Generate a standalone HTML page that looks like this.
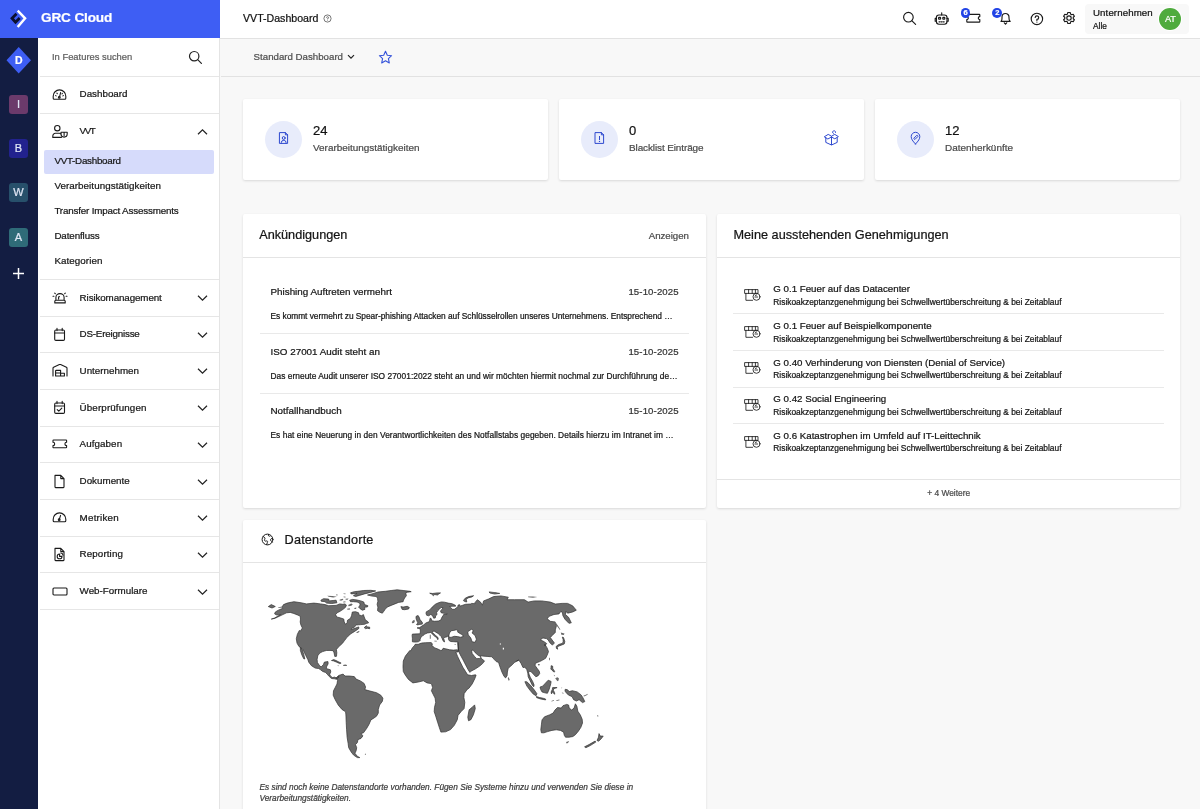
<!DOCTYPE html>
<html lang="de">
<head>
<meta charset="utf-8">
<title>VVT-Dashboard</title>
<style>
*{box-sizing:border-box;margin:0;padding:0}
html,body{width:1200px;height:809px;overflow:hidden;background:#f8f8f8;font-family:"Liberation Sans",sans-serif;color:#1c1c1c;-webkit-text-stroke:.22px currentColor}
.abs{position:absolute}
#brand{position:absolute;left:0;top:0;width:220px;height:38px;background:#3e5ef4}
#brand .t{position:absolute;left:41px;top:9px;font-size:13.6px;line-height:18px;color:#fff;font-weight:bold;letter-spacing:-0.15px}
#rail{position:absolute;left:0;top:38px;width:38px;height:771px;background:#131d42}
.rb{position:absolute;left:9px;width:19px;height:19px;border-radius:3px;color:#dfe6f5;font-size:11px;line-height:19px;text-align:center}
#nav{position:absolute;left:38px;top:38px;width:182px;height:771px;background:#fff;border-right:1px solid #e4e4e4}
#nav .hr{position:absolute;left:2px;right:0;height:1px;background:#e6e6e6}
#nav .it{position:absolute;left:41.6px;font-size:9.8px;line-height:14px;color:#161616;white-space:nowrap}
#nav .sub{position:absolute;left:16.4px;font-size:9.8px;line-height:14px;color:#161616;white-space:nowrap}
#nav svg.ic{position:absolute;left:14px}
#nav svg.ch{position:absolute;left:159px}
#topbar{position:absolute;left:220px;top:0;width:980px;height:38.6px;background:#fff;border-bottom:1px solid #e2e2e2}
#toolbar{position:absolute;left:221px;top:39px;width:979px;height:38px;background:#f8f8f8;border-bottom:1px solid #e2e2e2}
.card{position:absolute;background:#fff;border-radius:2px;box-shadow:0 1px 2.5px rgba(0,0,0,.13)}
.circle{position:absolute;width:37px;height:37px;border-radius:50%;background:#e8ecfb}
.num{position:absolute;font-size:13px;line-height:16px;color:#111}
.lbl{position:absolute;font-size:9.95px;line-height:14px;color:#4a4a4a;white-space:nowrap}
.h{position:absolute;font-size:12.7px;line-height:18px;color:#141414;white-space:nowrap}
.line{position:absolute;height:1px;background:#e4e4e4}
.at{position:absolute;font-size:9.85px;line-height:14px;color:#141414;white-space:nowrap}
.ad{position:absolute;font-size:9.6px;line-height:14px;color:#333;white-space:nowrap}
.ab{position:absolute;font-size:8.35px;line-height:12px;color:#141414;white-space:nowrap}
.gt{position:absolute;font-size:9.72px;line-height:14px;color:#141414;white-space:nowrap}
.gs{position:absolute;font-size:8.4px;line-height:12px;color:#141414;white-space:nowrap}
</style>
</head>
<body><div id="root" style="position:absolute;left:0;top:0;width:1200px;height:809px;overflow:hidden;will-change:transform">
<!-- brand -->
<div id="brand">
<svg class="abs" style="left:9px;top:8px" width="20" height="22" viewBox="9 8 20 22"><path d="M16.5 13.7 L12 18.3 L15.5 22.2 L19.7 18" fill="none" stroke="#0b1030" stroke-width="2.8" stroke-linejoin="miter"/><path d="M17.7 10.7 L25.1 18.3 L17.7 27" fill="none" stroke="#fff" stroke-width="2.4"/></svg>
<div class="t">GRC Cloud</div>
</div>
<!-- rail -->
<div id="rail">
<svg class="abs" style="left:4px;top:8px" width="30" height="30" viewBox="0 0 30 30"><path d="M14.7 0.9 L27 14.2 L14.7 27.4 L2.5 14.2 Z" fill="#3e5ef4"/></svg>
<div class="abs" style="left:3.7px;top:15px;width:30px;text-align:center;color:#fff;font-weight:bold;font-size:10.5px;line-height:14px">D</div>
<div class="rb" style="top:57px;background:#6b3a6b">I</div>
<div class="rb" style="top:101px;background:#22228e">B</div>
<div class="rb" style="top:145px;background:#27506b">W</div>
<div class="rb" style="top:189.5px;background:#2f6b78">A</div>
<svg class="abs" style="left:12px;top:228.7px" width="13" height="13" viewBox="0 0 13 13"><path d="M6.5 1v11M1 6.5h11" stroke="#fff" stroke-width="1.5" fill="none"/></svg>
</div>
<!-- nav -->
<div id="nav">
<div class="abs" style="left:14px;top:12px;font-size:9.4px;line-height:13px;color:#5e5e5e;white-space:nowrap">In Features suchen</div>
<svg class="abs" style="left:150px;top:11.5px" width="15" height="15" viewBox="0 0 15 15"><circle cx="6.2" cy="6.2" r="4.7" fill="none" stroke="#222" stroke-width="1.2"/><path d="M9.7 9.7 L13.4 13.4" stroke="#222" stroke-width="1.2" stroke-linecap="round"/></svg>
<div class="hr" style="top:37.8px"></div>
<div class="hr" style="top:74.5px"></div>
<div class="hr" style="top:240.8px"></div>
<div class="hr" style="top:277.5px"></div>
<div class="hr" style="top:314.2px"></div>
<div class="hr" style="top:350.9px"></div>
<div class="hr" style="top:387.6px"></div>
<div class="hr" style="top:424.3px"></div>
<div class="hr" style="top:460.9px"></div>
<div class="hr" style="top:497.6px"></div>
<div class="hr" style="top:534.3px"></div>
<div class="hr" style="top:571.0px"></div>
<svg class="ic" style="top:48.5px" width="16" height="15" viewBox="0 0 16 15"><path d="M1.2 11.2 V9.2 A6.3 6.3 0 0 1 13.8 9.2 V11.2 Q13.8 12.2 12.8 12.2 H2.2 Q1.2 12.2 1.2 11.2 Z" fill="none" stroke="#1a1a1a" stroke-width="1.1" stroke-linejoin="round" stroke-linecap="round"/><path d="M7.5 10.2 L8.6 5.6 M3.6 8.6 l.5.3 M4.9 6.2l.4.5 M11.4 8.6l-.5.3 M10.4 6.4l-.4.4" fill="none" stroke="#1a1a1a" stroke-width="1.1" stroke-linejoin="round" stroke-linecap="round"/><circle cx="7.3" cy="10.4" r=".9" fill="none" stroke="#1a1a1a" stroke-width="1.1" stroke-linejoin="round" stroke-linecap="round"/></svg>
<div class="it" style="top:49.0px">Dashboard</div>
<svg class="ic" style="top:85.5px" width="18" height="15" viewBox="0 0 18 15"><circle cx="5.3" cy="4.2" r="2.7" fill="none" stroke="#1a1a1a" stroke-width="1.1" stroke-linejoin="round" stroke-linecap="round"/><path d="M.8 13.4 V11.9 A2.6 2.6 0 0 1 3.4 9.3 H7.4 Q8.3 9.3 8.9 9.8 M.8 13.4 H9.4" fill="none" stroke="#1a1a1a" stroke-width="1.1" stroke-linejoin="round" stroke-linecap="round"/><path d="M9 8.2 H15.2 V9.8 A3.1 3.3 0 0 1 9 9.8 Z M12.1 8.4 V11.6" fill="none" stroke="#1a1a1a" stroke-width="1.1" stroke-linejoin="round" stroke-linecap="round"/></svg>
<div class="it" style="top:86.0px;letter-spacing:-1.45px">VVT</div>
<svg class="ch" style="top:89.5px" width="11" height="8" viewBox="0 0 11 7.5"><path d="M1 6 L5.5 1.5 L10 6" fill="none" stroke="#222" stroke-width="1.2"/></svg>
<svg class="ic" style="top:252.0px" width="16" height="15" viewBox="0 0 16 15"><path d="M3.9 10.2 V7.4 A4.1 3.8 0 0 1 12.1 7.4 V10.2 M2.8 12.9 V11.2 Q2.8 10.2 3.8 10.2 H12.2 Q13.2 10.2 13.2 11.2 V12.9 Z M6.6 9 V7.4 Q6.6 6.6 7.4 6.6" fill="none" stroke="#1a1a1a" stroke-width="1.1" stroke-linejoin="round" stroke-linecap="round"/><path d="M1 6.3h.9 M14.1 6.3h.9 M2.7 3.1l.6.6 M13.3 3.1l-.6.6" fill="none" stroke="#1a1a1a" stroke-width="1.1" stroke-linejoin="round" stroke-linecap="round"/></svg>
<div class="it" style="top:252.5px;letter-spacing:-0.11px">Risikomanagement</div>
<svg class="ch" style="top:256.0px" width="11" height="8" viewBox="0 0 11 7.5"><path d="M1 1.5 L5.5 6 L10 1.5" fill="none" stroke="#222" stroke-width="1.2"/></svg>
<svg class="ic" style="top:288.7px" width="16" height="15" viewBox="0 0 16 15"><rect x="2.7" y="3" width="9.8" height="10.4" rx="1.2" fill="none" stroke="#1a1a1a" stroke-width="1.1" stroke-linejoin="round" stroke-linecap="round"/><path d="M2.7 6 H12.5 M5 1.4 V3.6 M10.2 1.4 V3.6" fill="none" stroke="#1a1a1a" stroke-width="1.1" stroke-linejoin="round" stroke-linecap="round"/></svg>
<div class="it" style="top:289.2px;letter-spacing:-0.2px">DS-Ereignisse</div>
<svg class="ch" style="top:292.7px" width="11" height="8" viewBox="0 0 11 7.5"><path d="M1 1.5 L5.5 6 L10 1.5" fill="none" stroke="#222" stroke-width="1.2"/></svg>
<svg class="ic" style="top:325.4px" width="16" height="15" viewBox="0 0 16 15"><path d="M1 13 V5.2 Q1 4.6 1.6 4.3 L7.4 1.6 Q8 1.4 8.6 1.6 L14.4 4.3 Q15 4.6 15 5.2 V13 M3.6 13 V8 Q3.6 7.4 4.2 7.4 H8.6 V13 M3.6 10 H8.6 M8.6 10.2 H12.4 V13 M3.6 13 H12.4" fill="none" stroke="#1a1a1a" stroke-width="1.1" stroke-linejoin="round" stroke-linecap="round"/></svg>
<div class="it" style="top:325.9px">Unternehmen</div>
<svg class="ch" style="top:329.4px" width="11" height="8" viewBox="0 0 11 7.5"><path d="M1 1.5 L5.5 6 L10 1.5" fill="none" stroke="#222" stroke-width="1.2"/></svg>
<svg class="ic" style="top:362.1px" width="16" height="15" viewBox="0 0 16 15"><rect x="2.7" y="3" width="9.8" height="10.4" rx="1.2" fill="none" stroke="#1a1a1a" stroke-width="1.1" stroke-linejoin="round" stroke-linecap="round"/><path d="M2.7 6 H12.5 M5 1.4 V3.6 M10.2 1.4 V3.6 M5.2 9.6 L6.8 11.2 L9.8 8.2" fill="none" stroke="#1a1a1a" stroke-width="1.1" stroke-linejoin="round" stroke-linecap="round"/></svg>
<div class="it" style="top:362.6px;letter-spacing:0.12px">Überprüfungen</div>
<svg class="ch" style="top:366.1px" width="11" height="8" viewBox="0 0 11 7.5"><path d="M1 1.5 L5.5 6 L10 1.5" fill="none" stroke="#222" stroke-width="1.2"/></svg>
<svg class="ic" style="top:398.8px" width="16" height="15" viewBox="0 0 16 15"><path d="M1.6 3 H14 Q14.6 3 14.6 3.6 V5.2 A1.7 1.7 0 0 0 14.6 8.6 V10.2 Q14.6 10.8 14 10.8 H1.6 Q1 10.8 1 10.2 V8.6 A1.7 1.7 0 0 0 1 5.2 V3.6 Q1 3 1.6 3 Z" fill="none" stroke="#1a1a1a" stroke-width="1.1" stroke-linejoin="round" stroke-linecap="round"/></svg>
<div class="it" style="top:399.3px;letter-spacing:0.08px">Aufgaben</div>
<svg class="ch" style="top:402.8px" width="11" height="8" viewBox="0 0 11 7.5"><path d="M1 1.5 L5.5 6 L10 1.5" fill="none" stroke="#222" stroke-width="1.2"/></svg>
<svg class="ic" style="top:435.5px" width="16" height="15" viewBox="0 0 16 15"><path d="M3 1.4 H8.8 L12 4.6 V13 Q12 13.6 11.4 13.6 H3.6 Q3 13.6 3 13 Z M8.8 1.4 V4.6 H12" fill="none" stroke="#1a1a1a" stroke-width="1.1" stroke-linejoin="round" stroke-linecap="round"/></svg>
<div class="it" style="top:436.0px">Dokumente</div>
<svg class="ch" style="top:439.5px" width="11" height="8" viewBox="0 0 11 7.5"><path d="M1 1.5 L5.5 6 L10 1.5" fill="none" stroke="#222" stroke-width="1.2"/></svg>
<svg class="ic" style="top:472.2px" width="16" height="15" viewBox="0 0 16 15"><path d="M1.2 10.8 V9.2 A6.3 6.3 0 0 1 13.8 9.2 V10.8 Q13.8 11.8 12.8 11.8 H2.2 Q1.2 11.8 1.2 10.8 Z M7.3 9.4 L8.6 5.4" fill="none" stroke="#1a1a1a" stroke-width="1.1" stroke-linejoin="round" stroke-linecap="round"/><circle cx="7.2" cy="9.8" r=".9" fill="none" stroke="#1a1a1a" stroke-width="1.1" stroke-linejoin="round" stroke-linecap="round"/></svg>
<div class="it" style="top:472.7px;letter-spacing:0.22px">Metriken</div>
<svg class="ch" style="top:476.2px" width="11" height="8" viewBox="0 0 11 7.5"><path d="M1 1.5 L5.5 6 L10 1.5" fill="none" stroke="#222" stroke-width="1.2"/></svg>
<svg class="ic" style="top:508.9px" width="16" height="15" viewBox="0 0 16 15"><path d="M3 1.4 H8.8 L12 4.6 V13 Q12 13.6 11.4 13.6 H3.6 Q3 13.6 3 13 Z M8.8 1.4 V4.6 H12" fill="none" stroke="#1a1a1a" stroke-width="1.1" stroke-linejoin="round" stroke-linecap="round"/><path d="M7.6 7 A2.4 2.4 0 1 0 10 9.4 H7.6 Z M8.8 6 A2.4 2.4 0 0 1 11 8.2" fill="none" stroke="#1a1a1a" stroke-width="1.1" stroke-linejoin="round" stroke-linecap="round"/></svg>
<div class="it" style="top:509.4px;letter-spacing:0.1px">Reporting</div>
<svg class="ch" style="top:512.9px" width="11" height="8" viewBox="0 0 11 7.5"><path d="M1 1.5 L5.5 6 L10 1.5" fill="none" stroke="#222" stroke-width="1.2"/></svg>
<svg class="ic" style="top:545.6px" width="16" height="15" viewBox="0 0 16 15"><rect x="1" y="4" width="14" height="7" rx="1" fill="none" stroke="#1a1a1a" stroke-width="1.1" stroke-linejoin="round" stroke-linecap="round"/></svg>
<div class="it" style="top:546.1px">Web-Formulare</div>
<svg class="ch" style="top:549.6px" width="11" height="8" viewBox="0 0 11 7.5"><path d="M1 1.5 L5.5 6 L10 1.5" fill="none" stroke="#222" stroke-width="1.2"/></svg>
<div class="abs" style="left:6px;top:111.5px;width:170px;height:24.5px;border-radius:2px;background:#d6dbfb"></div>
<div class="sub" style="top:116.0px;letter-spacing:-0.27px">VVT-Dashboard</div>
<div class="sub" style="top:141.0px;letter-spacing:0.06px">Verarbeitungstätigkeiten</div>
<div class="sub" style="top:166.0px;letter-spacing:-0.17px">Transfer Impact Assessments</div>
<div class="sub" style="top:191.0px;letter-spacing:-0.11px">Datenfluss</div>
<div class="sub" style="top:216.0px;letter-spacing:0.07px">Kategorien</div>
</div>
<!-- topbar -->
<div id="topbar">
<div class="abs" style="left:23px;top:11px;font-size:10.6px;line-height:14px;color:#111;white-space:nowrap">VVT-Dashboard</div>
<svg class="abs" style="left:102.5px;top:13.5px" width="9" height="9" viewBox="0 0 9 9"><circle cx="4.5" cy="4.5" r="3.6" fill="none" stroke="#555" stroke-width=".8"/><path d="M3.5 3.7 A1 1 0 1 1 4.5 4.7 V5.3" fill="none" stroke="#555" stroke-width=".8"/><circle cx="4.5" cy="6.4" r=".45" fill="#555"/></svg>
<!-- search -->
<svg class="abs" style="left:682px;top:11px" width="16" height="16" viewBox="902 11 16 16"><circle cx="908.4" cy="17.2" r="4.8" fill="none" stroke="#1a1a1a" stroke-width="1.15" stroke-linejoin="round" stroke-linecap="round"/><path d="M912 20.8 L915.6 24.4" fill="none" stroke="#1a1a1a" stroke-width="1.15" stroke-linejoin="round" stroke-linecap="round"/></svg>
<!-- robot -->
<svg class="abs" style="left:713px;top:11px" width="18" height="16" viewBox="933 11 18 16"><rect x="936.4" y="15" width="10.6" height="9.2" rx="2.6" fill="none" stroke="#1a1a1a" stroke-width="1.15" stroke-linejoin="round" stroke-linecap="round"/><path d="M941.7 15 V12.8 M936.4 18.4 H935.2 V21.2 H936.4 M947 18.4 H948.2 V21.2 H947" fill="none" stroke="#1a1a1a" stroke-width="1.15" stroke-linejoin="round" stroke-linecap="round"/><rect x="938.6" y="17.4" width="2" height="1.8" rx=".4" fill="none" stroke="#1a1a1a" stroke-width="1.15" stroke-linejoin="round" stroke-linecap="round"/><rect x="942.8" y="17.4" width="2" height="1.8" rx=".4" fill="none" stroke="#1a1a1a" stroke-width="1.15" stroke-linejoin="round" stroke-linecap="round"/><path d="M939 21.8 H944.4" fill="none" stroke="#1a1a1a" stroke-width="1.15" stroke-linejoin="round" stroke-linecap="round" stroke-dasharray="1 1.1"/></svg>
<!-- ticket -->
<svg class="abs" style="left:744px;top:11px" width="18" height="14" viewBox="964 11 18 14"><path d="M967.4 14.4 H979.2 Q979.8 14.4 979.8 15 V16.6 A1.5 1.5 0 0 0 979.8 19.6 V21.5 Q979.8 22.1 979.2 22.1 H967.4 Q966.8 22.1 966.8 21.5 V19.6 A1.5 1.5 0 0 0 966.8 16.6 V15 Q966.8 14.4 967.4 14.4 Z" fill="none" stroke="#1a1a1a" stroke-width="1.15" stroke-linejoin="round" stroke-linecap="round"/></svg>
<div class="abs" style="left:740.7px;top:8px;width:9.8px;height:9.8px;border-radius:50%;background:#2143e6;color:#fff;font-size:7.5px;line-height:10px;text-align:center;font-weight:bold">6</div>
<!-- bell -->
<svg class="abs" style="left:778px;top:11px" width="16" height="16" viewBox="998 11 16 16"><path d="M1001 21.4 C1002.4 20 1002 18.4 1002 17 A3.5 3.5 0 0 1 1009 17 C1009 18.4 1008.6 20 1010.2 21.4 Z M1004.3 22.8 L1005.5 24.2 L1006.7 22.8" fill="none" stroke="#1a1a1a" stroke-width="1.15" stroke-linejoin="round" stroke-linecap="round"/></svg>
<div class="abs" style="left:772.4px;top:8px;width:9.8px;height:9.8px;border-radius:50%;background:#2143e6;color:#fff;font-size:7.5px;line-height:10px;text-align:center;font-weight:bold">2</div>
<!-- help -->
<svg class="abs" style="left:809px;top:10.5px" width="16" height="16" viewBox="1029 10.5 16 16"><circle cx="1036.9" cy="18.4" r="5.7" fill="none" stroke="#1a1a1a" stroke-width="1.15" stroke-linejoin="round" stroke-linecap="round"/><path d="M1035.2 17 A1.75 1.75 0 1 1 1036.9 18.9 V19.9" fill="none" stroke="#1a1a1a" stroke-width="1.15" stroke-linejoin="round" stroke-linecap="round"/><circle cx="1036.9" cy="21.6" r=".6" fill="#1a1a1a"/></svg>
<!-- gear -->
<svg class="abs" style="left:840.5px;top:10.4px" width="16" height="16" viewBox="-8 -8 16 16"><path d="M-1.50 -4.03 L-1.17 -5.53 L1.17 -5.53 L1.50 -4.03 L2.74 -3.31 L4.20 -3.78 L5.37 -1.75 L4.24 -0.72 L4.24 0.72 L5.37 1.75 L4.20 3.78 L2.74 3.31 L1.50 4.03 L1.17 5.53 L-1.17 5.53 L-1.50 4.03 L-2.74 3.31 L-4.20 3.78 L-5.37 1.75 L-4.24 0.72 L-4.24 -0.72 L-5.37 -1.75 L-4.20 -3.78 L-2.74 -3.31 Z" fill="none" stroke="#1a1a1a" stroke-width="1.15" stroke-linejoin="round" stroke-linecap="round"/><circle cx="0" cy="0" r="2.2" fill="none" stroke="#1a1a1a" stroke-width="1.15" stroke-linejoin="round" stroke-linecap="round"/></svg>
<!-- user pill -->
<div class="abs" style="left:865px;top:4px;width:104px;height:30px;border-radius:4px;background:#f8f8f8"></div>
<div class="abs" style="left:873px;top:6px;font-size:9.7px;line-height:13px;color:#111;white-space:nowrap;letter-spacing:0.1px">Unternehmen</div>
<div class="abs" style="left:873px;top:20.1px;font-size:8.3px;line-height:12px;color:#111;white-space:nowrap">Alle</div>
<div class="abs" style="left:939.4px;top:7.8px;width:21.8px;height:21.8px;border-radius:50%;background:#4fab3e;box-shadow:0 0 0 1px rgba(255,255,255,.95);color:#fff;font-size:9.2px;line-height:22px;text-align:center;letter-spacing:-.2px">AT</div>
</div>
<div id="toolbar">
<div class="abs" style="left:32.6px;top:11px;font-size:9.7px;line-height:13px;color:#4f4f4f;white-space:nowrap">Standard Dashboard</div>
<svg class="abs" style="left:125.5px;top:15px" width="8" height="6" viewBox="0 0 8 6"><path d="M1 1.2 L4 4.2 L7 1.2" fill="none" stroke="#222" stroke-width="1.2"/></svg>
<svg class="abs" style="left:156.5px;top:10.5px" width="15" height="15" viewBox="0 0 15 15"><path d="M7.5 1.3 L9.3 5.3 L13.6 5.7 L10.4 8.6 L11.3 12.9 L7.5 10.7 L3.7 12.9 L4.6 8.6 L1.4 5.7 L5.7 5.3 Z" fill="none" stroke="#3452d9" stroke-width="1.1" stroke-linejoin="round"/></svg>
</div>
<div class="card" style="left:243px;top:98.5px;width:305px;height:81.5px">
<div class="circle" style="left:22px;top:22.5px"></div>
<svg class="abs" style="left:33px;top:31.8px" width="15" height="16" viewBox="0 0 15 16"><path d="M3.8 2.6 H9.4 L11.6 4.8 V13.4 H3.8 Z M9.4 2.6 V4.8 H11.6" fill="none" stroke="#2e49cf" stroke-width="1" stroke-linejoin="round" stroke-linecap="round"/><circle cx="7.7" cy="8" r="1.45" fill="none" stroke="#2e49cf" stroke-width="1" stroke-linejoin="round" stroke-linecap="round"/><path d="M5.4 13.2 V12.4 A2 2 0 0 1 7.2 10.4 H8.2 A2 2 0 0 1 10 12.4 V13.2" fill="none" stroke="#2e49cf" stroke-width="1" stroke-linejoin="round" stroke-linecap="round"/></svg>
<div class="num" style="left:70px;top:24px">24</div>
<div class="lbl" style="left:70px;top:42.2px">Verarbeitungstätigkeiten</div>
</div>
<div class="card" style="left:559px;top:98.5px;width:305px;height:81.5px">
<div class="circle" style="left:22px;top:22.5px"></div>
<svg class="abs" style="left:33px;top:31.8px" width="15" height="16" viewBox="0 0 15 16"><path d="M3.4 2.6 H9.4 L11.6 4.8 V13.4 H3.4 Z M9.4 2.6 V4.8 H11.6" fill="none" stroke="#2e49cf" stroke-width="1" stroke-linejoin="round" stroke-linecap="round"/><path d="M7.5 6.4 V9.6" fill="none" stroke="#2e49cf" stroke-width="1" stroke-linejoin="round" stroke-linecap="round" stroke-width="1.3"/><circle cx="7.5" cy="11.4" r=".7" fill="#2e49cf"/></svg>
<div class="num" style="left:70px;top:24px">0</div>
<div class="lbl" style="left:70px;top:42.2px;letter-spacing:-0.1px">Blacklist Einträge</div><svg class="abs" style="left:263.7px;top:31.8px" width="17" height="17" viewBox="0 0 17 17" stroke-width="1.25"><path d="M1.6 6.6 L5.2 4.4 L8.5 6.2 L11.8 4.4 L15.4 6.6 L11.8 8.8 L8.5 7 L5.2 8.8 Z M8.5 6.6 V14.6 M2.8 7.8 V12.4 L8.5 15 L14.2 12.4 V7.8" fill="none" stroke="#2e49cf" stroke-width="1" stroke-linejoin="round" stroke-linecap="round"/><path d="M10.4 3.6 A1.5 1.5 0 1 1 12.6 2.4" fill="none" stroke="#2e49cf" stroke-width="1" stroke-linejoin="round" stroke-linecap="round"/></svg>
</div>
<div class="card" style="left:875px;top:98.5px;width:305px;height:81.5px">
<div class="circle" style="left:22px;top:22.5px"></div>
<svg class="abs" style="left:33px;top:31.8px" width="15" height="16" viewBox="0 0 15 16"><path d="M7.5 14 C4.4 10.8 3.2 8.8 3.2 6.6 A4.3 4.3 0 0 1 11.8 6.6 C11.8 8.8 10.6 10.8 7.5 14 Z" fill="none" stroke="#2e49cf" stroke-width="1" stroke-linejoin="round" stroke-linecap="round"/><path d="M6 8.2 L8.6 5.4 A.9.9 0 0 1 9.8 6.6 L7.2 9.2 Z" fill="none" stroke="#2e49cf" stroke-width="1" stroke-linejoin="round" stroke-linecap="round" stroke-width=".8"/></svg>
<div class="num" style="left:70px;top:24px">12</div>
<div class="lbl" style="left:70px;top:42.2px">Datenherkünfte</div>
</div>
<div class="card" style="left:243px;top:213.8px;width:463px;height:294.4px;border-top:.7px solid #fff">
<div class="h" style="left:16.2px;top:11.5px">Ankündigungen</div>
<div class="abs" style="left:405.7px;top:14.0px;font-size:9.66px;line-height:13px;color:#4a4a4a;white-space:nowrap">Anzeigen</div>
<div class="line" style="left:0;top:42.2px;width:463px"></div>
<div class="at" style="left:27.5px;top:70.3px">Phishing Auftreten vermehrt</div>
<div class="ad" style="left:385.4px;top:70.3px;letter-spacing:0.13px">15-10-2025</div>
<div class="ab" style="left:27.5px;top:95.5px;letter-spacing:-0.023px">Es kommt vermehrt zu Spear-phishing Attacken auf Schlüsselrollen unseres Unternehmens. Entsprechend …</div>
<div class="line" style="left:16.6px;top:118.5px;width:429.4px;background:#e9e9e9"></div>
<div class="at" style="left:27.5px;top:130.1px">ISO 27001 Audit steht an</div>
<div class="ad" style="left:385.4px;top:130.1px;letter-spacing:0.13px">15-10-2025</div>
<div class="ab" style="left:27.5px;top:155.3px;letter-spacing:0.035px">Das erneute Audit unserer ISO 27001:2022 steht an und wir möchten hiermit nochmal zur Durchführung de…</div>
<div class="line" style="left:16.6px;top:178.3px;width:429.4px;background:#e9e9e9"></div>
<div class="at" style="left:27.5px;top:189.3px">Notfallhandbuch</div>
<div class="ad" style="left:385.4px;top:189.3px;letter-spacing:0.13px">15-10-2025</div>
<div class="ab" style="left:27.5px;top:214.5px;letter-spacing:0.05px">Es hat eine Neuerung in den Verantwortlichkeiten des Notfallstabs gegeben. Details hierzu im Intranet im …</div>
</div>
<div class="card" style="left:717px;top:213.8px;width:463px;height:294.4px;border-top:.7px solid #fff">
<div class="h" style="left:16.5px;top:11.5px">Meine ausstehenden Genehmigungen</div>
<div class="line" style="left:0;top:42.2px;width:463px"></div>
<svg class="abs" style="left:26px;top:72.4px" width="18" height="16" viewBox="0 0 18 16"><path d="M2 2.6 H15 V6.4 H2 Z M5.6 2.6 V6.4 M9.2 2.6 V6.4 M12.4 2.6 V5.6 M2.9 6.4 V13.3 H9.6" fill="none" stroke="#1a1a1a" stroke-width=".85" stroke-linejoin="round" stroke-linecap="round"/><circle cx="13.5" cy="9.8" r="3.5" fill="none" stroke="#1a1a1a" stroke-width=".85" stroke-linejoin="round" stroke-linecap="round"/><path d="M11.9 10 H14.6 M12.2 8.6 Q12.8 7.8 13.6 7.9" fill="none" stroke="#1a1a1a" stroke-width=".85" stroke-linejoin="round" stroke-linecap="round" stroke-width=".9"/></svg>
<div class="gt" style="left:56.3px;top:67.7px">G 0.1 Feuer auf das Datacenter</div>
<div class="gs" style="left:56.3px;top:81.3px">Risikoakzeptanzgenehmigung bei Schwellwertüberschreitung &amp; bei Zeitablauf</div>
<div class="line" style="left:15.5px;top:98.6px;width:431.5px;background:#e9e9e9"></div>
<svg class="abs" style="left:26px;top:109.0px" width="18" height="16" viewBox="0 0 18 16"><path d="M2 2.6 H15 V6.4 H2 Z M5.6 2.6 V6.4 M9.2 2.6 V6.4 M12.4 2.6 V5.6 M2.9 6.4 V13.3 H9.6" fill="none" stroke="#1a1a1a" stroke-width=".85" stroke-linejoin="round" stroke-linecap="round"/><circle cx="13.5" cy="9.8" r="3.5" fill="none" stroke="#1a1a1a" stroke-width=".85" stroke-linejoin="round" stroke-linecap="round"/><path d="M11.9 10 H14.6 M12.2 8.6 Q12.8 7.8 13.6 7.9" fill="none" stroke="#1a1a1a" stroke-width=".85" stroke-linejoin="round" stroke-linecap="round" stroke-width=".9"/></svg>
<div class="gt" style="left:56.3px;top:104.3px">G 0.1 Feuer auf Beispielkomponente</div>
<div class="gs" style="left:56.3px;top:117.9px">Risikoakzeptanzgenehmigung bei Schwellwertüberschreitung &amp; bei Zeitablauf</div>
<div class="line" style="left:15.5px;top:135.2px;width:431.5px;background:#e9e9e9"></div>
<svg class="abs" style="left:26px;top:145.6px" width="18" height="16" viewBox="0 0 18 16"><path d="M2 2.6 H15 V6.4 H2 Z M5.6 2.6 V6.4 M9.2 2.6 V6.4 M12.4 2.6 V5.6 M2.9 6.4 V13.3 H9.6" fill="none" stroke="#1a1a1a" stroke-width=".85" stroke-linejoin="round" stroke-linecap="round"/><circle cx="13.5" cy="9.8" r="3.5" fill="none" stroke="#1a1a1a" stroke-width=".85" stroke-linejoin="round" stroke-linecap="round"/><path d="M11.9 10 H14.6 M12.2 8.6 Q12.8 7.8 13.6 7.9" fill="none" stroke="#1a1a1a" stroke-width=".85" stroke-linejoin="round" stroke-linecap="round" stroke-width=".9"/></svg>
<div class="gt" style="left:56.3px;top:140.9px">G 0.40 Verhinderung von Diensten (Denial of Service)</div>
<div class="gs" style="left:56.3px;top:154.5px">Risikoakzeptanzgenehmigung bei Schwellwertüberschreitung &amp; bei Zeitablauf</div>
<div class="line" style="left:15.5px;top:171.8px;width:431.5px;background:#e9e9e9"></div>
<svg class="abs" style="left:26px;top:182.2px" width="18" height="16" viewBox="0 0 18 16"><path d="M2 2.6 H15 V6.4 H2 Z M5.6 2.6 V6.4 M9.2 2.6 V6.4 M12.4 2.6 V5.6 M2.9 6.4 V13.3 H9.6" fill="none" stroke="#1a1a1a" stroke-width=".85" stroke-linejoin="round" stroke-linecap="round"/><circle cx="13.5" cy="9.8" r="3.5" fill="none" stroke="#1a1a1a" stroke-width=".85" stroke-linejoin="round" stroke-linecap="round"/><path d="M11.9 10 H14.6 M12.2 8.6 Q12.8 7.8 13.6 7.9" fill="none" stroke="#1a1a1a" stroke-width=".85" stroke-linejoin="round" stroke-linecap="round" stroke-width=".9"/></svg>
<div class="gt" style="left:56.3px;top:177.5px">G 0.42 Social Engineering</div>
<div class="gs" style="left:56.3px;top:191.1px">Risikoakzeptanzgenehmigung bei Schwellwertüberschreitung &amp; bei Zeitablauf</div>
<div class="line" style="left:15.5px;top:208.4px;width:431.5px;background:#e9e9e9"></div>
<svg class="abs" style="left:26px;top:218.8px" width="18" height="16" viewBox="0 0 18 16"><path d="M2 2.6 H15 V6.4 H2 Z M5.6 2.6 V6.4 M9.2 2.6 V6.4 M12.4 2.6 V5.6 M2.9 6.4 V13.3 H9.6" fill="none" stroke="#1a1a1a" stroke-width=".85" stroke-linejoin="round" stroke-linecap="round"/><circle cx="13.5" cy="9.8" r="3.5" fill="none" stroke="#1a1a1a" stroke-width=".85" stroke-linejoin="round" stroke-linecap="round"/><path d="M11.9 10 H14.6 M12.2 8.6 Q12.8 7.8 13.6 7.9" fill="none" stroke="#1a1a1a" stroke-width=".85" stroke-linejoin="round" stroke-linecap="round" stroke-width=".9"/></svg>
<div class="gt" style="left:56.3px;top:214.1px">G 0.6 Katastrophen im Umfeld auf IT-Leittechnik</div>
<div class="gs" style="left:56.3px;top:227.7px">Risikoakzeptanzgenehmigung bei Schwellwertüberschreitung &amp; bei Zeitablauf</div>
<div class="line" style="left:0;top:264.0px;width:463px"></div>
<div class="abs" style="left:210.2px;top:272.3px;font-size:8.4px;line-height:12px;color:#4a4a4a;white-space:nowrap">+ 4 Weitere</div>
</div>
<div class="card" style="left:243px;top:519.5px;width:463px;height:300px">
<svg class="abs" style="left:17.5px;top:13.5px" width="13" height="13" viewBox="0 0 13 13"><circle cx="6.5" cy="6.5" r="5.4" fill="none" stroke="#1a1a1a" stroke-width="1" stroke-linejoin="round" stroke-linecap="round"/><path d="M2.2 3.6 C4 4.2 4.4 5.4 3.6 6.6 C3 7.6 4.4 8.6 5.4 8 C6.4 7.4 7 8.6 6.2 9.8 L5.8 11.6 M7.4 1.4 C6.8 2.8 8 3.6 9 3.2 M11.6 5.2 C10.2 5.4 9.2 6.2 9.6 7.4 C10 8.4 11 8.2 11.4 9" fill="none" stroke="#1a1a1a" stroke-width="1" stroke-linejoin="round" stroke-linecap="round" stroke-width=".9"/></svg>
<div class="h" style="left:41.6px;top:11.0px;letter-spacing:0.16px">Datenstandorte</div>
<div class="line" style="left:0;top:42.4px;width:463px"></div>
<!--MAPS--><svg class="abs" style="left:0;top:0" width="463" height="290" viewBox="0 0 463 290"><defs><filter id="mb" x="-2%" y="-2%" width="104%" height="104%"><feGaussianBlur stdDeviation="0.18"/></filter></defs><g filter="url(#mb)"><path d="M40.5 84.6 44.2 83.1 50.9 81.7 58.3 82.8 63.5 83.9 70.9 83.1 77.6 83.9 82.0 84.6 85.7 85.7 93.1 85.4 96.8 83.9 99.8 84.3 101.9 83.9 103.4 85.0 102.6 87.2 100.4 89.1 97.1 91.3 94.1 92.8 92.6 94.6 93.7 96.9 97.8 98.0 100.8 99.1 101.2 102.0 102.6 104.3 104.1 102.8 104.5 100.2 107.5 98.3 108.6 95.4 109.3 92.0 112.7 91.7 115.6 92.8 116.0 95.0 118.6 95.7 120.4 94.6 121.2 96.9 122.3 99.8 124.9 101.7 125.6 102.8 123.4 103.5 121.5 104.3 117.8 104.6 113.4 105.0 111.2 107.2 108.9 108.0 108.2 109.5 112.7 108.0 115.6 106.9 116.0 108.3 114.1 109.8 111.2 111.7 107.5 113.9 106.0 115.4 103.8 117.6 101.5 120.6 99.3 123.5 98.1 124.6 95.2 127.2 93.4 129.6 93.8 132.7 93.5 136.3 91.8 136.5 91.0 132.7 90.1 130.7 87.0 130.4 83.3 130.5 79.6 131.6 76.7 133.1 74.8 135.7 74.1 139.4 74.4 142.4 76.3 145.3 78.1 147.0 80.4 144.6 81.4 142.1 85.0 141.6 85.1 143.9 83.8 146.2 83.2 148.5 84.8 149.0 87.4 149.8 87.8 152.0 86.7 154.2 87.4 156.1 89.6 157.6 91.5 157.1 93.3 157.9 94.4 156.8 95.6 155.9 95.9 157.2 94.4 158.3 93.3 159.3 91.5 158.8 88.5 158.5 86.3 156.6 84.4 154.4 82.6 152.5 79.6 151.4 77.4 149.6 75.5 148.5 72.2 148.1 68.5 145.7 65.9 142.4 64.8 139.4 62.9 135.7 61.1 132.0 59.2 128.3 58.1 128.1 55.9 126.4 54.0 123.1 53.3 118.7 54.4 114.2 56.3 110.5 57.5 110.9 59.4 108.0 57.9 105.0 57.2 102.0 57.5 99.1 57.2 96.1 54.6 95.0 50.9 93.5 47.2 92.4 43.5 92.8 39.8 94.6 32.0 98.3 28.3 99.1 31.6 98.0 37.5 94.6 33.8 95.0 31.6 93.9 32.3 92.0 35.3 90.2 39.8 88.3 39.0 87.2ZM57.4 127.5 58.9 129.0 60.7 134.2 61.8 139.0 60.7 138.7 58.9 135.0 57.4 130.5ZM25.3 86.6 28.3 84.6 32.3 86.5 29.0 88.0ZM77.9 80.2 80.5 78.7 85.7 79.1 86.1 80.9 90.2 80.5 93.1 80.2 93.9 82.8 88.7 83.5 83.5 83.1 82.0 81.7 78.3 81.3ZM107.5 72.8 111.2 71.7 114.9 71.3 120.8 70.5 127.5 70.3 132.7 70.9 127.5 72.4 121.5 73.9 116.4 75.4 112.7 76.5 110.4 75.7 112.7 74.2 114.1 73.1 111.2 73.7 108.2 73.9ZM106.7 80.2 109.7 79.4 114.1 80.0 117.8 80.9 120.8 82.0 121.5 84.6 124.9 85.7 124.5 86.9 121.5 87.2 121.9 89.4 119.3 90.2 117.1 88.7 115.6 87.2 117.1 85.0 116.7 83.1 114.1 82.0 110.4 81.7 107.5 81.7ZM121.2 107.6 123.4 105.8 124.5 106.9 126.7 107.2 126.7 108.7 124.5 108.3 122.3 108.6ZM124.5 75.0 129.0 73.9 134.9 72.0 142.3 71.3 148.2 70.5 154.2 69.8 160.1 70.5 167.0 71.3 168.2 71.7 164.5 72.2 162.7 72.8 163.4 75.7 161.6 78.0 160.5 80.2 160.1 81.7 155.6 82.4 151.9 83.9 148.2 85.4 144.5 86.9 142.3 89.1 140.8 91.3 139.3 93.2 136.4 92.0 134.5 90.6 134.9 87.2 134.1 84.3 134.9 81.3 134.5 78.3 133.4 76.5 129.0 76.1ZM157.9 86.6 160.1 87.1 164.2 86.3 166.3 87.4 165.6 89.0 161.6 89.7 159.2 89.4ZM88.5 140.5 90.7 139.6 93.0 140.5 95.9 142.0 98.1 143.1 96.7 143.6 93.7 142.2 90.7 140.9ZM93.3 157.9 95.8 155.4 100.1 154.1 102.0 156.0 106.3 156.0 111.3 156.6 113.1 159.1 117.4 160.9 121.1 163.4 122.6 167.1 121.8 169.6 126.1 170.8 133.5 172.7 137.8 175.2 139.9 178.2 139.4 181.3 136.6 185.0 135.3 189.4 135.3 193.1 133.5 196.2 131.0 198.0 127.9 199.9 126.1 204.2 123.6 208.5 120.5 212.8 118.0 213.5 119.9 215.9 118.0 218.4 115.0 219.6 114.3 222.7 112.5 224.6 113.7 227.7 113.1 230.8 111.9 233.2 114.3 236.3 116.8 237.6 114.3 237.6 110.6 235.1 108.2 232.0 105.7 227.7 105.1 223.3 104.1 217.2 103.6 209.8 103.2 202.3 102.9 194.9 102.6 191.8 98.9 189.4 95.2 185.0 92.1 179.5 90.2 175.2 90.5 170.8 92.1 167.7 94.0 164.0 94.6 160.3ZM172.2 124.3 175.3 124.3 177.0 123.6 178.9 123.0 182.6 122.7 188.1 122.6 189.4 123.8 188.9 125.6 191.8 127.9 194.8 129.0 197.8 130.5 199.2 130.1 200.1 128.3 202.2 128.7 206.7 129.8 210.4 130.1 214.1 129.8 215.4 130.1 215.2 131.9 212.8 132.1 214.6 136.4 216.9 141.3 219.8 147.2 222.6 151.6 224.6 154.8 228.5 155.5 232.2 154.8 233.1 155.1 231.8 158.7 229.2 163.9 225.9 168.3 224.2 169.4 221.1 173.7 220.9 177.5 221.8 182.4 221.1 188.6 218.0 191.7 215.0 195.4 214.3 199.7 211.3 205.3 207.5 209.6 202.6 211.8 197.9 212.1 196.4 207.7 194.6 202.2 192.7 196.0 191.2 191.7 191.5 187.3 192.7 182.4 192.1 178.1 190.2 174.4 188.4 170.7 189.6 167.6 188.4 163.6 184.1 162.9 180.4 160.8 175.4 162.0 169.9 162.9 165.5 159.5 162.4 155.2 160.3 151.5 160.0 146.6 160.3 141.0 162.4 136.1 166.8 130.5 167.9 130.8 169.4 127.7 171.3 125.8ZM226.1 189.8 229.2 187.3 231.6 184.9 232.3 188.6 230.4 194.8 227.9 199.7 225.5 200.7 224.8 197.2ZM175.3 121.8 172.2 122.1 169.4 121.8 169.4 118.4 169.1 115.3 169.4 114.1 177.1 113.8 177.4 111.0 177.1 108.8 174.0 107.9 176.8 107.5 178.1 106.6 180.5 105.0 183.0 102.9 186.4 101.6 186.7 100.1 187.3 97.9 188.3 98.9 188.6 100.7 191.7 101.3 195.4 101.0 197.8 100.1 198.5 98.2 199.1 97.0 200.0 95.8 200.6 94.5 204.0 94.5 204.3 93.6 200.6 93.3 198.1 92.7 197.5 90.8 199.1 89.3 200.0 87.7 198.1 87.4 196.3 89.3 194.7 90.8 193.5 92.7 194.1 94.5 192.6 95.8 192.3 97.9 190.7 98.2 189.8 96.4 189.2 95.2 187.6 94.5 185.8 95.8 183.6 95.2 183.0 93.3 183.3 91.8 186.7 89.9 189.2 87.1 192.3 84.3 195.4 82.8 198.5 81.9 201.5 82.2 205.2 83.1 209.0 83.7 212.4 85.3 212.7 86.2 209.0 86.2 206.8 86.5 207.7 87.7 209.6 89.3 211.4 89.3 213.3 88.1 214.8 86.5 215.1 85.0 216.7 84.7 217.0 86.2 219.5 85.3 222.5 84.3 227.5 84.0 228.7 83.4 232.0 83.7 231.9 82.7 234.4 79.7 237.5 82.1 239.4 85.2 240.6 80.9 245.5 79.0 250.5 76.6 257.9 75.9 265.3 77.2 264.1 79.7 271.5 79.7 281.4 79.7 285.1 82.1 291.3 80.9 298.7 80.9 307.3 82.1 312.3 84.0 319.1 83.4 324.6 83.4 329.6 85.8 333.3 90.2 329.6 92.0 324.6 93.2 323.1 91.4 322.4 94.5 325.6 97.3 328.3 102.8 325.9 103.3 322.1 99.4 319.9 95.7 319.4 92.4 317.8 91.4 316.0 93.9 311.0 94.5 306.1 96.3 304.2 98.8 307.3 101.3 311.6 101.9 313.5 105.6 312.3 109.9 312.3 112.4 309.2 115.5 307.3 117.5 309.2 120.1 311.4 123.0 309.4 125.1 306.8 122.7 305.0 119.7 303.4 118.6 299.9 118.0 297.4 119.8 301.1 121.7 303.6 123.5 301.8 126.0 301.8 124.2 304.1 127.9 305.5 131.6 304.1 135.3 302.6 138.3 299.6 140.1 296.7 141.6 294.4 142.4 292.2 143.5 292.2 145.7 294.4 148.7 296.3 151.3 296.7 153.5 295.2 155.7 292.9 156.8 290.7 154.6 288.5 152.0 287.0 151.3 285.5 151.6 285.9 153.9 287.4 157.6 289.6 161.3 291.1 165.0 290.7 166.8 289.2 165.0 287.0 160.5 285.2 156.8 284.8 153.1 283.7 149.4 281.8 147.2 280.0 147.6 278.1 143.5 275.9 140.1 273.7 140.9 275.6 140.2 271.5 142.4 267.8 146.1 265.2 148.3 264.4 152.0 264.1 155.7 262.6 157.9 261.1 156.5 258.9 152.0 256.7 146.1 255.6 142.4 253.3 141.6 251.5 139.8 248.9 136.8 244.1 136.4 239.6 136.1 237.4 135.7 238.1 138.3 241.5 140.9 239.6 143.5 236.7 146.1 232.2 149.0 227.8 151.3 226.9 152.4 225.2 149.8 222.7 145.0 220.0 139.8 217.4 135.0 215.7 131.4 215.7 130.4 215.2 129.0 214.8 122.4 215.5 130.1 215.5 126.7 215.5 122.3 213.7 121.9 210.4 121.7 207.8 121.5 206.3 120.8 205.5 119.3 205.4 117.5 205.5 115.6 203.7 116.9 201.8 117.3 200.7 118.4 201.3 120.4 201.6 121.9 200.4 121.3 199.2 118.7 198.2 116.5 196.9 115.2 195.1 113.5 192.9 112.2 191.3 111.2 189.8 111.2 189.2 112.0 189.9 112.7 192.2 115.2 194.6 117.0 195.3 119.2 194.5 119.5 193.9 117.7 191.6 116.2 189.2 113.9 188.5 112.9 187.6 112.5 184.4 113.0 181.8 114.1 180.5 115.3 178.9 116.1 178.1 117.2 177.0 119.3 177.4 120.3ZM173.1 96.3 175.1 95.5 176.2 97.3 177.0 99.5 178.2 101.0 179.4 102.6 179.3 104.1 176.8 104.4 174.2 105.0 173.5 104.2 175.0 102.9 174.2 101.6 173.6 100.1 173.0 98.2ZM186.7 73.2 189.8 73.5 194.1 72.9 197.5 72.9 195.4 74.1 194.7 75.1 191.7 74.5 190.4 75.7 188.6 74.1ZM220.4 80.6 222.2 78.2 225.6 76.6 230.6 75.7 229.0 76.9 225.0 77.9 223.2 79.4 223.8 81.9 221.9 81.6ZM246.2 71.9 251.7 72.6 256.7 73.4 251.7 74.0 246.8 73.0ZM319.3 117.1 320.5 117.5 321.8 121.6 321.2 124.0 318.1 125.2 315.3 126.2 314.3 127.6 314.7 129.2 313.5 128.5 313.1 126.5 315.5 124.6 318.9 123.4 320.2 122.2 320.1 119.4ZM308.1 145.7 309.6 146.1 309.8 148.7 311.8 151.6 311.1 152.1 308.9 150.2 307.8 149.0 308.1 147.2ZM297.0 167.1 299.6 166.2 302.4 163.2 305.2 160.2 308.1 161.4 307.8 163.6 307.0 166.6 306.0 169.7 304.4 173.3 301.8 172.8 299.0 171.9 297.7 169.6ZM309.6 167.6 314.1 167.6 310.7 168.7 310.4 170.5 311.5 172.4 311.8 174.2 310.7 173.5 309.6 171.6 308.5 173.9 308.1 172.0 309.3 169.4ZM281.9 161.7 283.9 161.8 287.5 165.3 291.2 169.8 293.9 173.7 293.1 175.7 290.4 174.2 287.2 170.5 283.9 166.1ZM293.3 176.5 296.7 177.6 300.4 178.3 302.6 179.1 302.6 179.9 298.1 179.1 293.7 177.7ZM322.2 169.3 324.5 169.7 326.2 171.6 329.3 170.7 334.2 171.9 338.1 174.9 340.0 177.9 341.8 181.6 339.5 182.6 336.1 179.7 333.4 181.0 330.6 179.7 329.0 176.6 326.2 175.4 323.8 173.5 322.0 171.1ZM298.4 212.8 297.8 209.8 298.4 204.8 299.0 199.9 301.5 196.8 306.4 194.9 310.1 193.1 312.0 190.0 314.5 187.5 318.2 188.1 320.0 185.7 323.7 184.4 325.6 185.0 326.2 188.1 328.7 190.0 331.1 188.1 332.4 183.8 333.9 186.3 334.8 191.2 337.3 194.9 339.2 199.3 339.5 203.0 337.9 207.3 335.5 211.0 332.4 214.7 329.9 216.5 326.2 217.2 322.5 217.2 321.3 215.3 320.6 212.2 317.5 210.4 313.2 209.8 308.9 210.4 304.6 211.6 300.9 212.8ZM354.0 220.5 355.5 217.2 356.0 213.6 357.3 216.1 360.2 216.1 358.2 218.8 355.6 221.2ZM341.6 226.8 346.0 224.6 352.1 221.1 352.8 222.1 347.2 225.6 342.9 227.7Z" fill="#6b6b6b" fill-rule="nonzero" stroke="#303030" stroke-width=".7" stroke-linejoin="round"/><path d="M34.9 87.4 39.0 86.6 39.0 87.6 35.7 88.1ZM84.2 75.7 89.4 76.1 93.9 76.8 90.2 77.4 85.7 76.7ZM96.8 79.4 99.8 79.1 99.1 80.5 96.5 80.4ZM100.4 73.4 102.6 73.6 102.4 74.3 100.5 74.1ZM93.0 74.5 94.6 74.6 94.5 75.4 93.1 75.2ZM100.6 76.4 102.7 76.7 102.4 77.6 100.6 77.3ZM97.1 79.4 99.7 78.7 100.4 79.8 97.8 80.7ZM102.6 78.7 105.6 78.5 104.6 79.8 102.6 79.7ZM100.0 81.7 102.3 81.3 102.6 82.2 100.4 82.5ZM105.2 85.0 108.2 83.5 109.8 84.3 108.4 85.7 105.6 86.2ZM104.1 88.7 106.7 88.3 107.2 89.4 104.5 89.7ZM111.2 88.0 113.4 87.5 113.1 88.9 111.5 88.9ZM113.0 112.4 115.6 110.9 116.7 111.7 114.5 113.0ZM100.0 145.0 102.2 144.5 104.1 145.0 103.7 146.0 100.4 146.0ZM94.1 145.6 95.9 145.5 95.6 146.3ZM121.9 233.7 122.9 233.7 122.9 234.7 121.9 234.7ZM191.3 120.7 193.7 120.7 193.9 121.5 191.5 121.5ZM186.8 114.8 187.7 114.8 187.8 118.8 186.8 118.8ZM211.5 124.5 212.8 124.3 212.8 125.0 211.5 125.1ZM171.3 99.8 171.9 101.3 171.0 102.9 169.1 103.2 168.8 102.3 169.7 100.7ZM246.4 71.9 251.9 72.6 256.2 73.4 251.9 73.6 247.0 72.6ZM285.1 76.4 290.0 76.4 294.3 77.1 290.0 77.7 285.1 77.3ZM311.2 101.0 312.1 101.5 315.2 106.1 317.4 109.6 316.9 110.1 314.3 106.5 311.5 102.2ZM317.7 112.6 319.6 113.1 321.5 113.5 320.8 115.0 318.4 114.8ZM306.1 137.5 307.0 138.3 306.8 140.4 306.1 139.9ZM294.8 144.1 296.7 143.9 296.7 145.2 295.2 145.4ZM310.7 154.7 311.8 155.3 311.5 156.5ZM312.2 158.3 314.4 157.2 315.9 158.3 315.6 160.5 314.4 161.3 313.3 159.8ZM318.5 167.6 319.1 167.6 319.1 168.2 318.5 168.2ZM318.9 172.6 320.7 173.0 320.7 173.6 318.9 173.3ZM308.3 181.0 310.8 180.1 311.0 180.8 308.6 181.6ZM313.2 180.2 316.3 179.5 316.6 180.2 313.6 181.0ZM265.2 156.8 266.7 159.4 265.9 161.1 264.8 158.7ZM340.4 175.8 343.5 174.5 344.2 173.7 344.7 174.7 341.0 176.4ZM323.1 222.1 326.2 220.9 325.0 223.1 323.5 223.6ZM354.1 195.2 355.1 195.2 355.4 196.4 354.4 196.4Z" fill="#6b6b6b"/><path d="M206.2 117.5 205.9 115.3 206.5 112.9 208.3 110.7 210.8 110.4 213.3 109.8 215.1 110.7 214.5 111.9 217.0 113.5 219.8 115.0 220.1 116.6 217.6 117.2 214.5 116.6 211.4 116.3 208.6 117.2ZM224.7 111.8 228.4 109.3 230.3 110.5 229.1 113.0 232.1 115.5 233.4 119.2 232.1 122.3 229.1 121.7 227.8 118.0 225.3 114.9ZM228.5 130.5 230.0 130.1 232.2 132.7 235.2 135.3 237.4 136.4 237.8 137.8 236.7 138.4 233.7 138.7 231.5 136.4 229.2 133.5Z" fill="#fff" stroke="#303030" stroke-width=".7" stroke-linejoin="round"/><path d="M256.8 123.4 258.0 123.4 258.0 124.6 256.8 124.6ZM259.8 127.8 261.0 127.8 261.0 129.5 259.8 129.5Z" fill="#fff"/></g></svg><!--MAPE-->
<div class="abs" style="left:16.5px;top:262.0px;width:400px;font-size:8.3px;line-height:11.2px;color:#3c3c3c;font-style:italic">Es sind noch keine Datenstandorte vorhanden. Fügen Sie Systeme hinzu und verwenden Sie diese in Verarbeitungstätigkeiten.</div>
</div>
</div></body>
</html>
